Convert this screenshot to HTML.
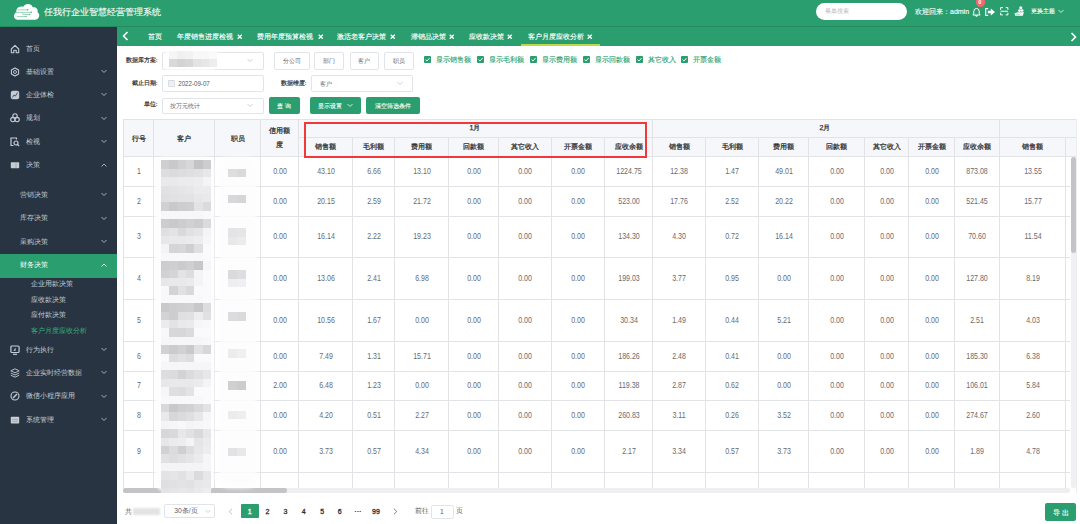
<!DOCTYPE html>
<html><head><meta charset="utf-8"><title>客户月度应收分析</title>
<style>
*{box-sizing:border-box;margin:0;padding:0}
html,body{width:1080px;height:524px;overflow:hidden;background:#fff;font-family:"Liberation Sans",sans-serif;position:relative}
.ab{position:absolute}
.t{position:absolute;white-space:nowrap;line-height:1}
.c{position:absolute;white-space:nowrap;line-height:1;transform:translate(-50%,-50%)}
.hd{left:0;top:0;width:1080px;height:27px;background:#2a9e6f}
.sb{left:0;top:27px;width:117px;height:497px;background:#283442}
.tb{left:117px;top:27px;width:963px;height:19px;background:#2a9e6f}
.mi{color:#c3ccd6;font-size:7px}
.tab{color:#fff;font-size:7px;-webkit-text-stroke:0.15px #fff}
.lbl{color:#333;font-size:6px;-webkit-text-stroke:0.2px #333}
.inp{border:1px solid #e1e4ea;border-radius:2px;background:#fff}
.btn{background:#2a9e6f;border-radius:2px;color:#fff;font-size:6.5px}
.bw{border:1px solid #e1e4ea;border-radius:2px;background:#fff;color:#606266;font-size:6.5px}
.chk{width:7px;height:7px;background:#2a9e6f;border-radius:1px}
.ck{color:#27a06c;font-size:7px;-webkit-text-stroke:0.12px #27a06c}
.vl{position:absolute;width:1px;background:#e2e3e7}
.hl{position:absolute;height:1px;background:#e2e3e7}
.th{color:#303133;font-size:7px;-webkit-text-stroke:0.25px #303133}
.td{color:#696b70;font-size:8.2px;transform:translate(-50%,-50%) scaleX(0.86)}
.mos{position:absolute;width:8.6px;height:8.6px}
</style></head><body>

<div class="ab hd"></div>
<div class="ab" style="left:0;top:26px;width:1080px;height:1px;background:#238a5f"></div>
<svg class="ab" style="left:10px;top:0" width="35" height="24" viewBox="0 0 764 524">
<path d="M160 430 C70 425 60 300 140 280 C120 190 200 120 290 150 C320 70 470 60 495 160 C570 140 625 210 600 265 C665 300 650 430 540 430 Z" fill="#fff"/>
<g stroke="#7cc5a2" stroke-width="16" fill="none"><path d="M160 215 H380"/><path d="M100 270 H460"/><path d="M280 315 H430"/><path d="M150 360 H350"/><path d="M260 270 L290 315"/></g>
<g fill="#5fb68d"><circle cx="385" cy="215" r="18"/><circle cx="462" cy="270" r="18"/><circle cx="432" cy="315" r="16"/><circle cx="352" cy="360" r="16"/></g>
</svg>
<div class="t" style="left:44px;top:7.5px;color:#fff;font-size:9px;-webkit-text-stroke:0.1px #fff">任我行企业智慧经营管理系统</div>
<div class="ab" style="left:816px;top:3px;width:91px;height:17px;background:#fff;border-radius:9px"></div>
<div class="t" style="left:825px;top:9.2px;color:#b8b8b8;font-size:5.5px">菜单搜索</div>
<div class="t" style="left:915px;top:7.5px;color:#fff;font-size:7px;-webkit-text-stroke:0.12px #fff">欢迎回来：admin</div>
<svg class="ab" style="left:972px;top:7px" width="9" height="9.5" viewBox="0 0 9 9.5"><path d="M1.8 7 V4.3 A2.7 2.8 0 0 1 7.2 4.3 V7 L8.2 8 H0.8 Z" stroke="#fff" stroke-width="1" fill="none" stroke-linejoin="round"/><path d="M3.6 8.4 A0.9 0.9 0 0 0 5.4 8.4" stroke="#fff" stroke-width="1" fill="#fff"/></svg>
<div class="ab" style="left:975.5px;top:-3.2px;width:9.8px;height:9.8px;border-radius:5px;background:#f06a6a"></div>
<div class="t" style="left:978.3px;top:-0.2px;color:#fff;font-size:5.5px;font-weight:bold">0</div>
<svg class="ab" style="left:985px;top:7.5px" width="10.5" height="8" viewBox="0 0 10.5 8"><path d="M3.2 0.6 H0.7 V7.4 H3.2" stroke="#fff" stroke-width="1.1" fill="none"/><path d="M2.8 2.8 H5.8 V0.5 L10 4 L5.8 7.5 V5.2 H2.8 Z" fill="#fff"/></svg>
<svg class="ab" style="left:1000px;top:7px" width="8.5" height="8.5" viewBox="0 0 8.5 8.5"><path d="M0.6 2.8 V0.6 H2.8 M5.7 0.6 H7.9 V2.8 M0.6 5.7 V7.9 H2.8 M5.7 7.9 H7.9 V5.7 M0.6 4.25 H7.9" stroke="#fff" stroke-width="1" fill="none"/></svg>
<svg class="ab" style="left:1013.5px;top:5.5px" width="10.5" height="10.5" viewBox="0 0 10.5 10.5"><circle cx="6.8" cy="1.8" r="1.5" fill="#fff"/><circle cx="5.5" cy="4.6" r="1.4" fill="#fff"/><circle cx="8.1" cy="4.6" r="1.4" fill="#fff"/><path d="M0.5 7.2 L4 6.2 H10 L8.8 9.8 H1.2 Z" fill="#fff"/><path d="M1.5 8.2 H6" stroke="#2a9e6f" stroke-width="0.5"/></svg>
<div class="t" style="left:1031px;top:8px;color:#fff;font-size:6px;-webkit-text-stroke:0.12px #fff">更换主题</div>
<svg class="ab" style="left:1058px;top:9px" width="6" height="5" viewBox="0 0 6 5"><path d="M0.5 1 L3 3.5 L5.5 1" stroke="#fff" stroke-width="0.8" fill="none"/></svg>
<div class="ab sb"></div>
<div class="ab" style="left:0;top:253.7px;width:117px;height:24px;background:#2a9e6f"></div>
<div class="t mi" style="left:20px;top:261.2px;color:#fff">财务决策</div>
<svg class="ab" style="left:101px;top:262.7px" width="6" height="5" viewBox="0 0 6 5"><path d="M0.5 3.5 L3 1 L5.5 3.5" stroke="#fff" stroke-width="0.8" fill="none"/></svg>
<div class="t mi" style="left:25.5px;top:44.6px">首页</div>
<svg class="ab" style="left:9.5px;top:43.6px" width="10" height="10" viewBox="0 0 10 10"><path d="M1.3 5 L5 1.3 L8.7 5 V8.8 H6.2 V6.3 H3.8 V8.8 H1.3 Z" stroke="#c5ccd4" stroke-width="1.1" fill="none" stroke-linejoin="round"/></svg>
<div class="t mi" style="left:25.5px;top:67.8px">基础设置</div>
<svg class="ab" style="left:101px;top:69.3px" width="6" height="5" viewBox="0 0 6 5"><path d="M0.5 1 L3 3.5 L5.5 1" stroke="#c3ccd6" stroke-width="0.8" fill="none"/></svg>
<svg class="ab" style="left:9.5px;top:66.8px" width="10" height="10" viewBox="0 0 10 10"><path d="M5 0.9 L8.6 3 V7 L5 9.1 L1.4 7 V3 Z" stroke="#c5ccd4" stroke-width="1.1" fill="none" stroke-linejoin="round"/><circle cx="5" cy="5" r="1.5" stroke="#c5ccd4" stroke-width="0.9" fill="none"/></svg>
<div class="t mi" style="left:25.5px;top:90.7px">企业体检</div>
<svg class="ab" style="left:101px;top:92.2px" width="6" height="5" viewBox="0 0 6 5"><path d="M0.5 1 L3 3.5 L5.5 1" stroke="#c3ccd6" stroke-width="0.8" fill="none"/></svg>
<svg class="ab" style="left:9.5px;top:89.7px" width="10" height="10" viewBox="0 0 10 10"><rect x="0.8" y="0.8" width="8.4" height="8.4" rx="2" fill="#c5ccd4"/><path d="M2.5 7.5 L4 5 L5.5 6 L7.5 2.5" stroke="#3d4856" stroke-width="0.9" fill="none"/></svg>
<div class="t mi" style="left:25.5px;top:114.2px">规划</div>
<svg class="ab" style="left:101px;top:115.7px" width="6" height="5" viewBox="0 0 6 5"><path d="M0.5 1 L3 3.5 L5.5 1" stroke="#c3ccd6" stroke-width="0.8" fill="none"/></svg>
<svg class="ab" style="left:9.5px;top:113.2px" width="10" height="10" viewBox="0 0 10 10"><circle cx="5" cy="3" r="2.2" stroke="#c5ccd4" stroke-width="1.1" fill="none"/><circle cx="2.9" cy="6.6" r="2.2" stroke="#c5ccd4" stroke-width="1.1" fill="none"/><circle cx="7.1" cy="6.6" r="2.2" stroke="#c5ccd4" stroke-width="1.1" fill="none"/></svg>
<div class="t mi" style="left:25.5px;top:137.9px">检视</div>
<svg class="ab" style="left:101px;top:139.4px" width="6" height="5" viewBox="0 0 6 5"><path d="M0.5 1 L3 3.5 L5.5 1" stroke="#c3ccd6" stroke-width="0.8" fill="none"/></svg>
<svg class="ab" style="left:9.5px;top:136.9px" width="10" height="10" viewBox="0 0 10 10"><path d="M6.5 2.5 V1 H1 V8.5 H3.5" stroke="#c5ccd4" stroke-width="1.2" fill="none"/><circle cx="6" cy="6" r="2" stroke="#c5ccd4" stroke-width="1.2" fill="none"/><path d="M7.5 7.5 L9.2 9.2" stroke="#c5ccd4" stroke-width="1.1"/></svg>
<div class="t mi" style="left:25.5px;top:161.2px">决策</div>
<svg class="ab" style="left:101px;top:162.7px" width="6" height="5" viewBox="0 0 6 5"><path d="M0.5 3.5 L3 1 L5.5 3.5" stroke="#c3ccd6" stroke-width="0.8" fill="none"/></svg>
<svg class="ab" style="left:9.5px;top:160.2px" width="10" height="10" viewBox="0 0 10 10"><rect x="0.8" y="2.2" width="8.4" height="6" rx="0.6" fill="#c5ccd4"/><path d="M6 2.2 V8.2" stroke="#8d96a3" stroke-width="0.6"/></svg>
<div class="t mi" style="left:20px;top:190.7px">营销决策</div>
<svg class="ab" style="left:101px;top:192.2px" width="6" height="5" viewBox="0 0 6 5"><path d="M0.5 1 L3 3.5 L5.5 1" stroke="#c3ccd6" stroke-width="0.8" fill="none"/></svg>
<div class="t mi" style="left:20px;top:214.2px">库存决策</div>
<svg class="ab" style="left:101px;top:215.7px" width="6" height="5" viewBox="0 0 6 5"><path d="M0.5 1 L3 3.5 L5.5 1" stroke="#c3ccd6" stroke-width="0.8" fill="none"/></svg>
<div class="t mi" style="left:20px;top:237.9px">采购决策</div>
<svg class="ab" style="left:101px;top:239.4px" width="6" height="5" viewBox="0 0 6 5"><path d="M0.5 1 L3 3.5 L5.5 1" stroke="#c3ccd6" stroke-width="0.8" fill="none"/></svg>
<div class="t mi" style="left:25.5px;top:345.6px">行为执行</div>
<svg class="ab" style="left:101px;top:347.1px" width="6" height="5" viewBox="0 0 6 5"><path d="M0.5 1 L3 3.5 L5.5 1" stroke="#c3ccd6" stroke-width="0.8" fill="none"/></svg>
<svg class="ab" style="left:9.5px;top:344.6px" width="10" height="10" viewBox="0 0 10 10"><rect x="0.9" y="1" width="8.2" height="6.5" rx="1" stroke="#c5ccd4" stroke-width="1.2" fill="none"/><path d="M3 9.3 H7" stroke="#c5ccd4" stroke-width="1.2"/><path d="M3.3 5.8 L5.6 2.8 V5.8 Z" fill="#c5ccd4"/></svg>
<div class="t mi" style="left:25.5px;top:368.7px">企业实时经营数据</div>
<svg class="ab" style="left:101px;top:370.2px" width="6" height="5" viewBox="0 0 6 5"><path d="M0.5 1 L3 3.5 L5.5 1" stroke="#c3ccd6" stroke-width="0.8" fill="none"/></svg>
<svg class="ab" style="left:9.5px;top:367.7px" width="10" height="10" viewBox="0 0 10 10"><path d="M5 0.8 L9.2 2.8 L5 4.8 L0.8 2.8 Z" stroke="#c5ccd4" stroke-width="0.9" fill="none"/><path d="M0.8 5 L5 7 L9.2 5 M0.8 7.2 L5 9.2 L9.2 7.2" stroke="#c5ccd4" stroke-width="0.9" fill="none"/></svg>
<div class="t mi" style="left:25.5px;top:392.2px">微信小程序应用</div>
<svg class="ab" style="left:101px;top:393.7px" width="6" height="5" viewBox="0 0 6 5"><path d="M0.5 1 L3 3.5 L5.5 1" stroke="#c3ccd6" stroke-width="0.8" fill="none"/></svg>
<svg class="ab" style="left:9.5px;top:391.2px" width="10" height="10" viewBox="0 0 10 10"><circle cx="5" cy="5" r="4" stroke="#c5ccd4" stroke-width="1.1" fill="none"/><path d="M3 7 L7 3" stroke="#c5ccd4" stroke-width="1.4"/></svg>
<div class="t mi" style="left:25.5px;top:415.5px">系统管理</div>
<svg class="ab" style="left:101px;top:417.0px" width="6" height="5" viewBox="0 0 6 5"><path d="M0.5 1 L3 3.5 L5.5 1" stroke="#c3ccd6" stroke-width="0.8" fill="none"/></svg>
<svg class="ab" style="left:9.5px;top:414.5px" width="10" height="10" viewBox="0 0 10 10"><rect x="0.8" y="1.8" width="8.4" height="6.8" rx="0.8" fill="#c5ccd4"/><path d="M2.2 4.5 H7.8 M2.2 6.3 H7.8" stroke="#8d96a3" stroke-width="0.6"/></svg>
<div class="t mi" style="left:30.5px;top:280.3px">企业用款决策</div>
<div class="t mi" style="left:30.5px;top:295.5px">应收款决策</div>
<div class="t mi" style="left:30.5px;top:311.2px">应付款决策</div>
<div class="t mi" style="left:31px;top:327.2px;color:#2fb27a">客户月度应收分析</div>
<div class="ab tb"></div>
<svg class="ab" style="left:122px;top:31px" width="7" height="10" viewBox="0 0 7 10"><path d="M5.5 1 L1.5 5 L5.5 9" stroke="#fff" stroke-width="1.6" fill="none"/></svg>
<svg class="ab" style="left:1070px;top:31.5px" width="7" height="10" viewBox="0 0 7 10"><path d="M1.5 1 L5.5 5 L1.5 9" stroke="#fff" stroke-width="1.6" fill="none"/></svg>
<div class="t tab" style="left:148px;top:33px">首页</div>
<div class="t tab" style="left:177px;top:33px">年度销售进度检视</div>
<svg class="ab" style="left:236.5px;top:33.6px" width="5.5" height="5.5" viewBox="0 0 5.5 5.5"><path d="M0.7 0.7 L4.8 4.8 M4.8 0.7 L0.7 4.8" stroke="#fff" stroke-width="1.3"/></svg>
<div class="t tab" style="left:257px;top:33px">费用年度预算检视</div>
<svg class="ab" style="left:318px;top:33.6px" width="5.5" height="5.5" viewBox="0 0 5.5 5.5"><path d="M0.7 0.7 L4.8 4.8 M4.8 0.7 L0.7 4.8" stroke="#fff" stroke-width="1.3"/></svg>
<div class="t tab" style="left:337px;top:33px">激活老客户决策</div>
<svg class="ab" style="left:390px;top:33.6px" width="5.5" height="5.5" viewBox="0 0 5.5 5.5"><path d="M0.7 0.7 L4.8 4.8 M4.8 0.7 L0.7 4.8" stroke="#fff" stroke-width="1.3"/></svg>
<div class="t tab" style="left:410.5px;top:33px">滞销品决策</div>
<svg class="ab" style="left:448.5px;top:33.6px" width="5.5" height="5.5" viewBox="0 0 5.5 5.5"><path d="M0.7 0.7 L4.8 4.8 M4.8 0.7 L0.7 4.8" stroke="#fff" stroke-width="1.3"/></svg>
<div class="t tab" style="left:469px;top:33px">应收款决策</div>
<svg class="ab" style="left:507px;top:33.6px" width="5.5" height="5.5" viewBox="0 0 5.5 5.5"><path d="M0.7 0.7 L4.8 4.8 M4.8 0.7 L0.7 4.8" stroke="#fff" stroke-width="1.3"/></svg>
<div class="t tab" style="left:527.5px;top:33px">客户月度应收分析</div>
<svg class="ab" style="left:587px;top:33.6px" width="5.5" height="5.5" viewBox="0 0 5.5 5.5"><path d="M0.7 0.7 L4.8 4.8 M4.8 0.7 L0.7 4.8" stroke="#fff" stroke-width="1.3"/></svg>
<div class="ab" style="left:520.5px;top:44px;width:79px;height:1.5px;background:#bcd94a"></div>
<div class="t lbl" style="right:922.5px;top:56.8px">数据库方案:</div>
<div class="t lbl" style="right:922.5px;top:79.8px">截止日期:</div>
<div class="t lbl" style="right:922.5px;top:101.39999999999999px">单位:</div>
<div class="t lbl" style="right:773.5px;top:79.8px">数据维度:</div>
<div class="ab inp" style="left:162px;top:52px;width:102px;height:17.5px"></div>
<svg class="ab" style="left:246.5px;top:58.25px" width="6" height="5" viewBox="0 0 6 5"><path d="M0.5 1 L3 3.5 L5.5 1" stroke="#c0c4cc" stroke-width="0.8" fill="none"/></svg>
<div class="ab" style="left:165px;top:50.5px;width:53px;height:19px;border-radius:2px 7px 7px 2px;background:#fff;filter:blur(0.8px)"></div>
<div class="ab" style="left:0;top:0;width:260px;height:80px;filter:blur(0.5px);border-radius:0"><div class="ab" style="left:169px;top:51.2px;width:8.2px;height:7.6px;background:rgb(246,246,246)"></div><div class="ab" style="left:169px;top:58.8px;width:8.2px;height:8.6px;background:rgb(216,217,216)"></div><div class="ab" style="left:177px;top:51.2px;width:8.2px;height:7.6px;background:rgb(240,240,240)"></div><div class="ab" style="left:177px;top:58.8px;width:8.2px;height:8.6px;background:rgb(210,211,210)"></div><div class="ab" style="left:185px;top:51.2px;width:8.2px;height:7.6px;background:rgb(242,242,242)"></div><div class="ab" style="left:185px;top:58.8px;width:8.2px;height:8.6px;background:rgb(214,215,214)"></div><div class="ab" style="left:193px;top:51.2px;width:8.2px;height:7.6px;background:rgb(248,248,248)"></div><div class="ab" style="left:193px;top:58.8px;width:8.2px;height:8.6px;background:rgb(226,227,226)"></div><div class="ab" style="left:201px;top:51.2px;width:8.2px;height:7.6px;background:rgb(248,248,248)"></div><div class="ab" style="left:201px;top:58.8px;width:8.2px;height:8.6px;background:rgb(230,231,230)"></div><div class="ab" style="left:209px;top:51.2px;width:8.2px;height:7.6px;background:rgb(250,250,250)"></div><div class="ab" style="left:209px;top:58.8px;width:8.2px;height:8.6px;background:rgb(236,237,236)"></div></div>
<div class="ab inp" style="left:162px;top:75px;width:102px;height:16.5px"></div>
<div class="c" style="left:193.6px;top:82.7px;color:#55575c;font-size:7px;transform:translate(-50%,-50%) scaleX(0.88)">2022-09-07</div>
<div class="ab" style="left:168px;top:80px;width:6.8px;height:6.8px;background:#eef0f4;border:0.8px solid #dcdfe6;border-top:1.6px solid #d6d9e0;border-radius:1px"></div>
<div class="ab inp" style="left:162px;top:97.5px;width:102px;height:16.5px"></div>
<div class="t" style="left:170px;top:103.15px;color:#606266;font-size:6px">按万元统计</div>
<svg class="ab" style="left:246.5px;top:103.25px" width="6" height="5" viewBox="0 0 6 5"><path d="M0.5 1 L3 3.5 L5.5 1" stroke="#c0c4cc" stroke-width="0.8" fill="none"/></svg>
<div class="ab inp" style="left:311px;top:75px;width:102px;height:16.5px"></div>
<div class="t" style="left:320px;top:80.65px;color:#606266;font-size:6px">客户</div>
<svg class="ab" style="left:396.5px;top:80.75px" width="6" height="5" viewBox="0 0 6 5"><path d="M0.5 1 L3 3.5 L5.5 1" stroke="#c0c4cc" stroke-width="0.8" fill="none"/></svg>
<div class="ab bw" style="left:274px;top:52px;width:35.5px;height:17.5px"></div>
<div class="c" style="left:291.75px;top:61.3px;color:#606266;font-size:6px">分公司</div>
<div class="ab bw" style="left:314px;top:52px;width:30px;height:17.5px"></div>
<div class="c" style="left:329.0px;top:61.3px;color:#606266;font-size:6px">部门</div>
<div class="ab bw" style="left:349.5px;top:52px;width:29px;height:17.5px"></div>
<div class="c" style="left:364.0px;top:61.3px;color:#606266;font-size:6px">客户</div>
<div class="ab bw" style="left:384px;top:52px;width:29.5px;height:17.5px"></div>
<div class="c" style="left:398.75px;top:61.3px;color:#606266;font-size:6px">职员</div>
<div class="ab btn" style="left:269px;top:97px;width:30.5px;height:17px"></div>
<div class="ab btn" style="left:310px;top:97px;width:51px;height:17px"></div>
<div class="ab btn" style="left:366px;top:97px;width:53.5px;height:17px"></div>
<div class="c" style="left:284px;top:105.5px;color:#fff;font-size:6px;-webkit-text-stroke:0.1px #fff">查 询</div>
<div class="c" style="left:330px;top:105.5px;color:#fff;font-size:6px;-webkit-text-stroke:0.1px #fff">显示设置</div>
<svg class="ab" style="left:346.5px;top:103.3px" width="6" height="5" viewBox="0 0 6 5"><path d="M0.5 1 L3 3.5 L5.5 1" stroke="#fff" stroke-width="0.8" fill="none"/></svg>
<div class="c" style="left:392.5px;top:105.5px;color:#fff;font-size:6px;-webkit-text-stroke:0.1px #fff">清空筛选条件</div>
<div class="ab chk" style="left:424px;top:56px"></div>
<svg class="ab" style="left:424px;top:56px" width="7" height="7" viewBox="0 0 7 7"><path d="M1.5 3.6 L3 5 L5.6 2" stroke="#fff" stroke-width="0.9" fill="none"/></svg>
<div class="t ck" style="left:436px;top:55.6px">显示销售额</div>
<div class="ab chk" style="left:477px;top:56px"></div>
<svg class="ab" style="left:477px;top:56px" width="7" height="7" viewBox="0 0 7 7"><path d="M1.5 3.6 L3 5 L5.6 2" stroke="#fff" stroke-width="0.9" fill="none"/></svg>
<div class="t ck" style="left:488.5px;top:55.6px">显示毛利额</div>
<div class="ab chk" style="left:530px;top:56px"></div>
<svg class="ab" style="left:530px;top:56px" width="7" height="7" viewBox="0 0 7 7"><path d="M1.5 3.6 L3 5 L5.6 2" stroke="#fff" stroke-width="0.9" fill="none"/></svg>
<div class="t ck" style="left:541.5px;top:55.6px">显示费用额</div>
<div class="ab chk" style="left:582.5px;top:56px"></div>
<svg class="ab" style="left:582.5px;top:56px" width="7" height="7" viewBox="0 0 7 7"><path d="M1.5 3.6 L3 5 L5.6 2" stroke="#fff" stroke-width="0.9" fill="none"/></svg>
<div class="t ck" style="left:594.5px;top:55.6px">显示回款额</div>
<div class="ab chk" style="left:636px;top:56px"></div>
<svg class="ab" style="left:636px;top:56px" width="7" height="7" viewBox="0 0 7 7"><path d="M1.5 3.6 L3 5 L5.6 2" stroke="#fff" stroke-width="0.9" fill="none"/></svg>
<div class="t ck" style="left:647.5px;top:55.6px">其它收入</div>
<div class="ab chk" style="left:681px;top:56px"></div>
<svg class="ab" style="left:681px;top:56px" width="7" height="7" viewBox="0 0 7 7"><path d="M1.5 3.6 L3 5 L5.6 2" stroke="#fff" stroke-width="0.9" fill="none"/></svg>
<div class="t ck" style="left:692.5px;top:55.6px">开票金额</div>
<div class="ab" style="left:123px;top:119px;width:952.5px;height:37px;background:#f5f7fa"></div>
<div class="hl" style="left:123px;top:119px;width:952.5px"></div>
<div class="hl" style="left:298px;top:137px;width:778px"></div>
<div class="hl" style="left:123px;top:156px;width:952.5px"></div>
<div class="hl" style="left:123px;top:186px;width:947px"></div>
<div class="hl" style="left:123px;top:216px;width:947px"></div>
<div class="hl" style="left:123px;top:257px;width:947px"></div>
<div class="hl" style="left:123px;top:299px;width:947px"></div>
<div class="hl" style="left:123px;top:341px;width:947px"></div>
<div class="hl" style="left:123px;top:371px;width:947px"></div>
<div class="hl" style="left:123px;top:400px;width:947px"></div>
<div class="hl" style="left:123px;top:430px;width:947px"></div>
<div class="hl" style="left:123px;top:472px;width:947px"></div>
<div class="vl" style="left:123px;top:119px;height:369px"></div>
<div class="vl" style="left:153px;top:119px;height:369px"></div>
<div class="vl" style="left:214px;top:119px;height:369px"></div>
<div class="vl" style="left:260px;top:119px;height:369px"></div>
<div class="vl" style="left:298px;top:119px;height:369px"></div>
<div class="vl" style="left:352px;top:137px;height:351px"></div>
<div class="vl" style="left:394px;top:137px;height:351px"></div>
<div class="vl" style="left:448px;top:137px;height:351px"></div>
<div class="vl" style="left:498px;top:137px;height:351px"></div>
<div class="vl" style="left:551px;top:137px;height:351px"></div>
<div class="vl" style="left:604px;top:137px;height:351px"></div>
<div class="vl" style="left:652px;top:119px;height:369px"></div>
<div class="vl" style="left:705px;top:137px;height:351px"></div>
<div class="vl" style="left:758px;top:137px;height:351px"></div>
<div class="vl" style="left:808px;top:137px;height:351px"></div>
<div class="vl" style="left:864px;top:137px;height:351px"></div>
<div class="vl" style="left:908px;top:137px;height:351px"></div>
<div class="vl" style="left:954px;top:137px;height:351px"></div>
<div class="vl" style="left:999px;top:119px;height:369px"></div>
<div class="vl" style="left:1065px;top:137px;height:351px"></div>
<div class="vl" style="left:1075.5px;top:119px;height:374px;background:#eceef2"></div>
<div class="c th" style="left:138.5px;top:138px">行号</div>
<div class="c th" style="left:184.0px;top:138px">客户</div>
<div class="c th" style="left:237.5px;top:138px">职员</div>
<div class="c th" style="left:279.5px;top:130px">信用额</div>
<div class="c th" style="left:279.5px;top:143.8px">度</div>
<div class="c th" style="left:475px;top:127.2px">1月</div>
<div class="c th" style="left:825px;top:127.2px">2月</div>
<div class="c th" style="left:325.5px;top:146.3px">销售额</div>
<div class="c th" style="left:679.0px;top:146.3px">销售额</div>
<div class="c th" style="left:373.5px;top:146.3px">毛利额</div>
<div class="c th" style="left:732.0px;top:146.3px">毛利额</div>
<div class="c th" style="left:421.5px;top:146.3px">费用额</div>
<div class="c th" style="left:783.5px;top:146.3px">费用额</div>
<div class="c th" style="left:473.5px;top:146.3px">回款额</div>
<div class="c th" style="left:836.5px;top:146.3px">回款额</div>
<div class="c th" style="left:525.0px;top:146.3px">其它收入</div>
<div class="c th" style="left:886.5px;top:146.3px">其它收入</div>
<div class="c th" style="left:578.0px;top:146.3px">开票金额</div>
<div class="c th" style="left:931.5px;top:146.3px">开票金额</div>
<div class="c th" style="left:628.5px;top:146.3px">应收余额</div>
<div class="c th" style="left:977.0px;top:146.3px">应收余额</div>
<div class="c th" style="left:1032px;top:146.3px">销售额</div>
<div class="c td" style="left:138.5px;top:171.5px">1</div>
<div class="c td" style="left:279.5px;top:171.5px">0.00</div>
<div class="c td" style="left:325.5px;top:171.5px">43.10</div>
<div class="c td" style="left:373.5px;top:171.5px">6.66</div>
<div class="c td" style="left:421.5px;top:171.5px">13.10</div>
<div class="c td" style="left:473.5px;top:171.5px">0.00</div>
<div class="c td" style="left:525.0px;top:171.5px">0.00</div>
<div class="c td" style="left:578.0px;top:171.5px">0.00</div>
<div class="c td" style="left:628.5px;top:171.5px">1224.75</div>
<div class="c td" style="left:679.0px;top:171.5px">12.38</div>
<div class="c td" style="left:732.0px;top:171.5px">1.47</div>
<div class="c td" style="left:783.5px;top:171.5px">49.01</div>
<div class="c td" style="left:836.5px;top:171.5px">0.00</div>
<div class="c td" style="left:886.5px;top:171.5px">0.00</div>
<div class="c td" style="left:931.5px;top:171.5px">0.00</div>
<div class="c td" style="left:977.0px;top:171.5px">873.08</div>
<div class="c td" style="left:1032.5px;top:171.5px">13.55</div>
<div class="c td" style="left:138.5px;top:201.5px">2</div>
<div class="c td" style="left:279.5px;top:201.5px">0.00</div>
<div class="c td" style="left:325.5px;top:201.5px">20.15</div>
<div class="c td" style="left:373.5px;top:201.5px">2.59</div>
<div class="c td" style="left:421.5px;top:201.5px">21.72</div>
<div class="c td" style="left:473.5px;top:201.5px">0.00</div>
<div class="c td" style="left:525.0px;top:201.5px">0.00</div>
<div class="c td" style="left:578.0px;top:201.5px">0.00</div>
<div class="c td" style="left:628.5px;top:201.5px">523.00</div>
<div class="c td" style="left:679.0px;top:201.5px">17.76</div>
<div class="c td" style="left:732.0px;top:201.5px">2.52</div>
<div class="c td" style="left:783.5px;top:201.5px">20.22</div>
<div class="c td" style="left:836.5px;top:201.5px">0.00</div>
<div class="c td" style="left:886.5px;top:201.5px">0.00</div>
<div class="c td" style="left:931.5px;top:201.5px">0.00</div>
<div class="c td" style="left:977.0px;top:201.5px">521.45</div>
<div class="c td" style="left:1032.5px;top:201.5px">15.77</div>
<div class="c td" style="left:138.5px;top:237.0px">3</div>
<div class="c td" style="left:279.5px;top:237.0px">0.00</div>
<div class="c td" style="left:325.5px;top:237.0px">16.14</div>
<div class="c td" style="left:373.5px;top:237.0px">2.22</div>
<div class="c td" style="left:421.5px;top:237.0px">19.23</div>
<div class="c td" style="left:473.5px;top:237.0px">0.00</div>
<div class="c td" style="left:525.0px;top:237.0px">0.00</div>
<div class="c td" style="left:578.0px;top:237.0px">0.00</div>
<div class="c td" style="left:628.5px;top:237.0px">134.30</div>
<div class="c td" style="left:679.0px;top:237.0px">4.30</div>
<div class="c td" style="left:732.0px;top:237.0px">0.72</div>
<div class="c td" style="left:783.5px;top:237.0px">16.14</div>
<div class="c td" style="left:836.5px;top:237.0px">0.00</div>
<div class="c td" style="left:886.5px;top:237.0px">0.00</div>
<div class="c td" style="left:931.5px;top:237.0px">0.00</div>
<div class="c td" style="left:977.0px;top:237.0px">70.60</div>
<div class="c td" style="left:1032.5px;top:237.0px">11.54</div>
<div class="c td" style="left:138.5px;top:278.5px">4</div>
<div class="c td" style="left:279.5px;top:278.5px">0.00</div>
<div class="c td" style="left:325.5px;top:278.5px">13.06</div>
<div class="c td" style="left:373.5px;top:278.5px">2.41</div>
<div class="c td" style="left:421.5px;top:278.5px">6.98</div>
<div class="c td" style="left:473.5px;top:278.5px">0.00</div>
<div class="c td" style="left:525.0px;top:278.5px">0.00</div>
<div class="c td" style="left:578.0px;top:278.5px">0.00</div>
<div class="c td" style="left:628.5px;top:278.5px">199.03</div>
<div class="c td" style="left:679.0px;top:278.5px">3.77</div>
<div class="c td" style="left:732.0px;top:278.5px">0.95</div>
<div class="c td" style="left:783.5px;top:278.5px">0.00</div>
<div class="c td" style="left:836.5px;top:278.5px">0.00</div>
<div class="c td" style="left:886.5px;top:278.5px">0.00</div>
<div class="c td" style="left:931.5px;top:278.5px">0.00</div>
<div class="c td" style="left:977.0px;top:278.5px">127.80</div>
<div class="c td" style="left:1032.5px;top:278.5px">8.19</div>
<div class="c td" style="left:138.5px;top:320.5px">5</div>
<div class="c td" style="left:279.5px;top:320.5px">0.00</div>
<div class="c td" style="left:325.5px;top:320.5px">10.56</div>
<div class="c td" style="left:373.5px;top:320.5px">1.67</div>
<div class="c td" style="left:421.5px;top:320.5px">0.00</div>
<div class="c td" style="left:473.5px;top:320.5px">0.00</div>
<div class="c td" style="left:525.0px;top:320.5px">0.00</div>
<div class="c td" style="left:578.0px;top:320.5px">0.00</div>
<div class="c td" style="left:628.5px;top:320.5px">30.34</div>
<div class="c td" style="left:679.0px;top:320.5px">1.49</div>
<div class="c td" style="left:732.0px;top:320.5px">0.44</div>
<div class="c td" style="left:783.5px;top:320.5px">5.21</div>
<div class="c td" style="left:836.5px;top:320.5px">0.00</div>
<div class="c td" style="left:886.5px;top:320.5px">0.00</div>
<div class="c td" style="left:931.5px;top:320.5px">0.00</div>
<div class="c td" style="left:977.0px;top:320.5px">2.51</div>
<div class="c td" style="left:1032.5px;top:320.5px">4.03</div>
<div class="c td" style="left:138.5px;top:356.5px">6</div>
<div class="c td" style="left:279.5px;top:356.5px">0.00</div>
<div class="c td" style="left:325.5px;top:356.5px">7.49</div>
<div class="c td" style="left:373.5px;top:356.5px">1.31</div>
<div class="c td" style="left:421.5px;top:356.5px">15.71</div>
<div class="c td" style="left:473.5px;top:356.5px">0.00</div>
<div class="c td" style="left:525.0px;top:356.5px">0.00</div>
<div class="c td" style="left:578.0px;top:356.5px">0.00</div>
<div class="c td" style="left:628.5px;top:356.5px">186.26</div>
<div class="c td" style="left:679.0px;top:356.5px">2.48</div>
<div class="c td" style="left:732.0px;top:356.5px">0.41</div>
<div class="c td" style="left:783.5px;top:356.5px">0.00</div>
<div class="c td" style="left:836.5px;top:356.5px">0.00</div>
<div class="c td" style="left:886.5px;top:356.5px">0.00</div>
<div class="c td" style="left:931.5px;top:356.5px">0.00</div>
<div class="c td" style="left:977.0px;top:356.5px">185.30</div>
<div class="c td" style="left:1032.5px;top:356.5px">6.38</div>
<div class="c td" style="left:138.5px;top:386.0px">7</div>
<div class="c td" style="left:279.5px;top:386.0px">2.00</div>
<div class="c td" style="left:325.5px;top:386.0px">6.48</div>
<div class="c td" style="left:373.5px;top:386.0px">1.23</div>
<div class="c td" style="left:421.5px;top:386.0px">0.00</div>
<div class="c td" style="left:473.5px;top:386.0px">0.00</div>
<div class="c td" style="left:525.0px;top:386.0px">0.00</div>
<div class="c td" style="left:578.0px;top:386.0px">0.00</div>
<div class="c td" style="left:628.5px;top:386.0px">119.38</div>
<div class="c td" style="left:679.0px;top:386.0px">2.87</div>
<div class="c td" style="left:732.0px;top:386.0px">0.62</div>
<div class="c td" style="left:783.5px;top:386.0px">0.00</div>
<div class="c td" style="left:836.5px;top:386.0px">0.00</div>
<div class="c td" style="left:886.5px;top:386.0px">0.00</div>
<div class="c td" style="left:931.5px;top:386.0px">0.00</div>
<div class="c td" style="left:977.0px;top:386.0px">106.01</div>
<div class="c td" style="left:1032.5px;top:386.0px">5.84</div>
<div class="c td" style="left:138.5px;top:415.5px">8</div>
<div class="c td" style="left:279.5px;top:415.5px">0.00</div>
<div class="c td" style="left:325.5px;top:415.5px">4.20</div>
<div class="c td" style="left:373.5px;top:415.5px">0.51</div>
<div class="c td" style="left:421.5px;top:415.5px">2.27</div>
<div class="c td" style="left:473.5px;top:415.5px">0.00</div>
<div class="c td" style="left:525.0px;top:415.5px">0.00</div>
<div class="c td" style="left:578.0px;top:415.5px">0.00</div>
<div class="c td" style="left:628.5px;top:415.5px">260.83</div>
<div class="c td" style="left:679.0px;top:415.5px">3.11</div>
<div class="c td" style="left:732.0px;top:415.5px">0.26</div>
<div class="c td" style="left:783.5px;top:415.5px">3.52</div>
<div class="c td" style="left:836.5px;top:415.5px">0.00</div>
<div class="c td" style="left:886.5px;top:415.5px">0.00</div>
<div class="c td" style="left:931.5px;top:415.5px">0.00</div>
<div class="c td" style="left:977.0px;top:415.5px">274.67</div>
<div class="c td" style="left:1032.5px;top:415.5px">2.60</div>
<div class="c td" style="left:138.5px;top:451.5px">9</div>
<div class="c td" style="left:279.5px;top:451.5px">0.00</div>
<div class="c td" style="left:325.5px;top:451.5px">3.73</div>
<div class="c td" style="left:373.5px;top:451.5px">0.57</div>
<div class="c td" style="left:421.5px;top:451.5px">4.34</div>
<div class="c td" style="left:473.5px;top:451.5px">0.00</div>
<div class="c td" style="left:525.0px;top:451.5px">0.00</div>
<div class="c td" style="left:578.0px;top:451.5px">0.00</div>
<div class="c td" style="left:628.5px;top:451.5px">2.17</div>
<div class="c td" style="left:679.0px;top:451.5px">3.34</div>
<div class="c td" style="left:732.0px;top:451.5px">0.57</div>
<div class="c td" style="left:783.5px;top:451.5px">3.73</div>
<div class="c td" style="left:836.5px;top:451.5px">0.00</div>
<div class="c td" style="left:886.5px;top:451.5px">0.00</div>
<div class="c td" style="left:931.5px;top:451.5px">0.00</div>
<div class="c td" style="left:977.0px;top:451.5px">1.89</div>
<div class="c td" style="left:1032.5px;top:451.5px">4.78</div>
<div class="ab" style="left:303.8px;top:122px;width:343.2px;height:36px;border:2px solid #f23838"></div>
<div class="ab" style="left:123px;top:488px;width:947px;height:4.5px;background:#efeff1;border-radius:2px"></div>
<div class="ab" style="left:123px;top:488px;width:164px;height:4.5px;background:#c4c4c8;border-radius:2px"></div>
<div class="ab" style="left:1070.5px;top:156.5px;width:5px;height:331px;background:#f0f0f2;border-radius:2.5px"></div>
<div class="ab" style="left:1070.5px;top:156.5px;width:5px;height:96px;background:#c4c4c8;border-radius:2.5px"></div>
<div class="ab" style="left:155px;top:157px;width:59px;height:336px;background:#fdfdfd;border-radius:10px 10px 14px 14px;filter:blur(1.5px)"></div>
<div class="ab" style="left:219px;top:157px;width:38px;height:331px;background:#fdfdfd;border-radius:10px;filter:blur(2px);opacity:.9"></div>
<div class="ab" style="left:0;top:0;width:1080px;height:524px;filter:blur(0.45px)"><div class="ab" style="left:160.8px;top:160.3px;width:8.5px;height:8.5px;background:rgb(207,207,209)"></div><div class="ab" style="left:169.2px;top:160.3px;width:8.5px;height:8.5px;background:rgb(201,201,203)"></div><div class="ab" style="left:177.6px;top:160.3px;width:8.5px;height:8.5px;background:rgb(209,209,211)"></div><div class="ab" style="left:186.0px;top:160.3px;width:8.5px;height:8.5px;background:rgb(215,215,217)"></div><div class="ab" style="left:194.4px;top:160.3px;width:8.5px;height:8.5px;background:rgb(195,195,197)"></div><div class="ab" style="left:202.8px;top:160.3px;width:8.5px;height:8.5px;background:rgb(205,205,207)"></div><div class="ab" style="left:160.8px;top:168.7px;width:8.5px;height:8.5px;background:rgb(221,221,223)"></div><div class="ab" style="left:169.2px;top:168.7px;width:8.5px;height:8.5px;background:rgb(219,219,221)"></div><div class="ab" style="left:177.6px;top:168.7px;width:8.5px;height:8.5px;background:rgb(221,221,223)"></div><div class="ab" style="left:186.0px;top:168.7px;width:8.5px;height:8.5px;background:rgb(223,223,225)"></div><div class="ab" style="left:194.4px;top:168.7px;width:8.5px;height:8.5px;background:rgb(225,225,227)"></div><div class="ab" style="left:202.8px;top:168.7px;width:8.5px;height:8.5px;background:rgb(231,231,233)"></div><div class="ab" style="left:160.8px;top:177.1px;width:8.5px;height:8.5px;background:rgb(233,233,235)"></div><div class="ab" style="left:169.2px;top:177.1px;width:8.5px;height:8.5px;background:rgb(233,233,235)"></div><div class="ab" style="left:177.6px;top:177.1px;width:8.5px;height:8.5px;background:rgb(235,235,237)"></div><div class="ab" style="left:186.0px;top:177.1px;width:8.5px;height:8.5px;background:rgb(235,235,237)"></div><div class="ab" style="left:194.4px;top:177.1px;width:8.5px;height:8.5px;background:rgb(237,237,239)"></div><div class="ab" style="left:202.8px;top:177.1px;width:8.5px;height:8.5px;background:rgb(244,244,246)"></div><div class="ab" style="left:160.8px;top:185.5px;width:8.5px;height:8.5px;background:rgb(225,225,227)"></div><div class="ab" style="left:169.2px;top:185.5px;width:8.5px;height:8.5px;background:rgb(227,227,229)"></div><div class="ab" style="left:177.6px;top:185.5px;width:8.5px;height:8.5px;background:rgb(229,229,231)"></div><div class="ab" style="left:186.0px;top:185.5px;width:8.5px;height:8.5px;background:rgb(231,231,233)"></div><div class="ab" style="left:194.4px;top:185.5px;width:8.5px;height:8.5px;background:rgb(235,235,237)"></div><div class="ab" style="left:202.8px;top:185.5px;width:8.5px;height:8.5px;background:rgb(235,235,237)"></div><div class="ab" style="left:160.8px;top:193.9px;width:8.5px;height:8.5px;background:rgb(223,223,225)"></div><div class="ab" style="left:169.2px;top:193.9px;width:8.5px;height:8.5px;background:rgb(225,225,227)"></div><div class="ab" style="left:177.6px;top:193.9px;width:8.5px;height:8.5px;background:rgb(227,227,229)"></div><div class="ab" style="left:186.0px;top:193.9px;width:8.5px;height:8.5px;background:rgb(227,227,229)"></div><div class="ab" style="left:194.4px;top:193.9px;width:8.5px;height:8.5px;background:rgb(231,231,233)"></div><div class="ab" style="left:202.8px;top:193.9px;width:8.5px;height:8.5px;background:rgb(233,233,235)"></div><div class="ab" style="left:160.8px;top:202.3px;width:8.5px;height:8.5px;background:rgb(209,209,211)"></div><div class="ab" style="left:169.2px;top:202.3px;width:8.5px;height:8.5px;background:rgb(201,201,203)"></div><div class="ab" style="left:177.6px;top:202.3px;width:8.5px;height:8.5px;background:rgb(205,205,207)"></div><div class="ab" style="left:186.0px;top:202.3px;width:8.5px;height:8.5px;background:rgb(207,207,209)"></div><div class="ab" style="left:194.4px;top:202.3px;width:8.5px;height:8.5px;background:rgb(227,227,229)"></div><div class="ab" style="left:202.8px;top:202.3px;width:8.5px;height:8.5px;background:rgb(219,219,221)"></div><div class="ab" style="left:160.8px;top:210.7px;width:8.5px;height:8.5px;background:rgb(247,247,249)"></div><div class="ab" style="left:169.2px;top:210.7px;width:8.5px;height:8.5px;background:rgb(247,247,249)"></div><div class="ab" style="left:177.6px;top:210.7px;width:8.5px;height:8.5px;background:rgb(247,247,249)"></div><div class="ab" style="left:186.0px;top:210.7px;width:8.5px;height:8.5px;background:rgb(247,247,249)"></div><div class="ab" style="left:194.4px;top:210.7px;width:8.5px;height:8.5px;background:rgb(247,247,249)"></div><div class="ab" style="left:202.8px;top:210.7px;width:8.5px;height:8.5px;background:rgb(249,249,251)"></div><div class="ab" style="left:160.8px;top:219.1px;width:8.5px;height:8.5px;background:rgb(205,205,207)"></div><div class="ab" style="left:169.2px;top:219.1px;width:8.5px;height:8.5px;background:rgb(201,201,203)"></div><div class="ab" style="left:177.6px;top:219.1px;width:8.5px;height:8.5px;background:rgb(205,205,207)"></div><div class="ab" style="left:186.0px;top:219.1px;width:8.5px;height:8.5px;background:rgb(209,209,211)"></div><div class="ab" style="left:194.4px;top:219.1px;width:8.5px;height:8.5px;background:rgb(205,205,207)"></div><div class="ab" style="left:202.8px;top:219.1px;width:8.5px;height:8.5px;background:rgb(219,219,221)"></div><div class="ab" style="left:160.8px;top:227.5px;width:8.5px;height:8.5px;background:rgb(223,223,225)"></div><div class="ab" style="left:169.2px;top:227.5px;width:8.5px;height:8.5px;background:rgb(227,227,229)"></div><div class="ab" style="left:177.6px;top:227.5px;width:8.5px;height:8.5px;background:rgb(217,217,219)"></div><div class="ab" style="left:186.0px;top:227.5px;width:8.5px;height:8.5px;background:rgb(225,225,227)"></div><div class="ab" style="left:194.4px;top:227.5px;width:8.5px;height:8.5px;background:rgb(229,229,231)"></div><div class="ab" style="left:202.8px;top:227.5px;width:8.5px;height:8.5px;background:rgb(244,244,246)"></div><div class="ab" style="left:160.8px;top:235.9px;width:8.5px;height:8.5px;background:rgb(231,231,233)"></div><div class="ab" style="left:169.2px;top:235.9px;width:8.5px;height:8.5px;background:rgb(233,233,235)"></div><div class="ab" style="left:177.6px;top:235.9px;width:8.5px;height:8.5px;background:rgb(233,233,235)"></div><div class="ab" style="left:186.0px;top:235.9px;width:8.5px;height:8.5px;background:rgb(235,235,237)"></div><div class="ab" style="left:194.4px;top:235.9px;width:8.5px;height:8.5px;background:rgb(237,237,239)"></div><div class="ab" style="left:202.8px;top:235.9px;width:8.5px;height:8.5px;background:rgb(246,246,248)"></div><div class="ab" style="left:160.8px;top:244.3px;width:8.5px;height:8.5px;background:rgb(244,244,246)"></div><div class="ab" style="left:169.2px;top:244.3px;width:8.5px;height:8.5px;background:rgb(213,213,215)"></div><div class="ab" style="left:177.6px;top:244.3px;width:8.5px;height:8.5px;background:rgb(215,215,217)"></div><div class="ab" style="left:186.0px;top:244.3px;width:8.5px;height:8.5px;background:rgb(207,207,209)"></div><div class="ab" style="left:194.4px;top:244.3px;width:8.5px;height:8.5px;background:rgb(223,223,225)"></div><div class="ab" style="left:202.8px;top:244.3px;width:8.5px;height:8.5px;background:rgb(250,250,252)"></div><div class="ab" style="left:160.8px;top:252.7px;width:8.5px;height:8.5px;background:rgb(248,248,250)"></div><div class="ab" style="left:169.2px;top:252.7px;width:8.5px;height:8.5px;background:rgb(248,248,250)"></div><div class="ab" style="left:177.6px;top:252.7px;width:8.5px;height:8.5px;background:rgb(248,248,250)"></div><div class="ab" style="left:186.0px;top:252.7px;width:8.5px;height:8.5px;background:rgb(248,248,250)"></div><div class="ab" style="left:194.4px;top:252.7px;width:8.5px;height:8.5px;background:rgb(248,248,250)"></div><div class="ab" style="left:202.8px;top:252.7px;width:8.5px;height:8.5px;background:rgb(250,250,252)"></div><div class="ab" style="left:160.8px;top:261.1px;width:8.5px;height:8.5px;background:rgb(205,205,207)"></div><div class="ab" style="left:169.2px;top:261.1px;width:8.5px;height:8.5px;background:rgb(207,207,209)"></div><div class="ab" style="left:177.6px;top:261.1px;width:8.5px;height:8.5px;background:rgb(203,203,205)"></div><div class="ab" style="left:186.0px;top:261.1px;width:8.5px;height:8.5px;background:rgb(207,207,209)"></div><div class="ab" style="left:194.4px;top:261.1px;width:8.5px;height:8.5px;background:rgb(199,199,201)"></div><div class="ab" style="left:202.8px;top:261.1px;width:8.5px;height:8.5px;background:rgb(246,246,248)"></div><div class="ab" style="left:160.8px;top:269.5px;width:8.5px;height:8.5px;background:rgb(209,209,211)"></div><div class="ab" style="left:169.2px;top:269.5px;width:8.5px;height:8.5px;background:rgb(213,213,215)"></div><div class="ab" style="left:177.6px;top:269.5px;width:8.5px;height:8.5px;background:rgb(227,227,229)"></div><div class="ab" style="left:186.0px;top:269.5px;width:8.5px;height:8.5px;background:rgb(221,221,223)"></div><div class="ab" style="left:194.4px;top:269.5px;width:8.5px;height:8.5px;background:rgb(244,244,246)"></div><div class="ab" style="left:202.8px;top:269.5px;width:8.5px;height:8.5px;background:rgb(250,250,252)"></div><div class="ab" style="left:160.8px;top:277.9px;width:8.5px;height:8.5px;background:rgb(231,231,233)"></div><div class="ab" style="left:169.2px;top:277.9px;width:8.5px;height:8.5px;background:rgb(233,233,235)"></div><div class="ab" style="left:177.6px;top:277.9px;width:8.5px;height:8.5px;background:rgb(233,233,235)"></div><div class="ab" style="left:186.0px;top:277.9px;width:8.5px;height:8.5px;background:rgb(235,235,237)"></div><div class="ab" style="left:194.4px;top:277.9px;width:8.5px;height:8.5px;background:rgb(244,244,246)"></div><div class="ab" style="left:202.8px;top:277.9px;width:8.5px;height:8.5px;background:rgb(250,250,252)"></div><div class="ab" style="left:160.8px;top:286.3px;width:8.5px;height:8.5px;background:rgb(248,248,250)"></div><div class="ab" style="left:169.2px;top:286.3px;width:8.5px;height:8.5px;background:rgb(211,211,213)"></div><div class="ab" style="left:177.6px;top:286.3px;width:8.5px;height:8.5px;background:rgb(225,225,227)"></div><div class="ab" style="left:186.0px;top:286.3px;width:8.5px;height:8.5px;background:rgb(217,217,219)"></div><div class="ab" style="left:194.4px;top:286.3px;width:8.5px;height:8.5px;background:rgb(250,250,252)"></div><div class="ab" style="left:202.8px;top:286.3px;width:8.5px;height:8.5px;background:rgb(250,250,252)"></div><div class="ab" style="left:160.8px;top:294.7px;width:8.5px;height:8.5px;background:rgb(248,248,250)"></div><div class="ab" style="left:169.2px;top:294.7px;width:8.5px;height:8.5px;background:rgb(248,248,250)"></div><div class="ab" style="left:177.6px;top:294.7px;width:8.5px;height:8.5px;background:rgb(248,248,250)"></div><div class="ab" style="left:186.0px;top:294.7px;width:8.5px;height:8.5px;background:rgb(248,248,250)"></div><div class="ab" style="left:194.4px;top:294.7px;width:8.5px;height:8.5px;background:rgb(248,248,250)"></div><div class="ab" style="left:202.8px;top:294.7px;width:8.5px;height:8.5px;background:rgb(250,250,252)"></div><div class="ab" style="left:160.8px;top:303.1px;width:8.5px;height:8.5px;background:rgb(201,201,203)"></div><div class="ab" style="left:169.2px;top:303.1px;width:8.5px;height:8.5px;background:rgb(205,205,207)"></div><div class="ab" style="left:177.6px;top:303.1px;width:8.5px;height:8.5px;background:rgb(207,207,209)"></div><div class="ab" style="left:186.0px;top:303.1px;width:8.5px;height:8.5px;background:rgb(209,209,211)"></div><div class="ab" style="left:194.4px;top:303.1px;width:8.5px;height:8.5px;background:rgb(199,199,201)"></div><div class="ab" style="left:202.8px;top:303.1px;width:8.5px;height:8.5px;background:rgb(221,221,223)"></div><div class="ab" style="left:160.8px;top:311.5px;width:8.5px;height:8.5px;background:rgb(211,211,213)"></div><div class="ab" style="left:169.2px;top:311.5px;width:8.5px;height:8.5px;background:rgb(205,205,207)"></div><div class="ab" style="left:177.6px;top:311.5px;width:8.5px;height:8.5px;background:rgb(223,223,225)"></div><div class="ab" style="left:186.0px;top:311.5px;width:8.5px;height:8.5px;background:rgb(225,225,227)"></div><div class="ab" style="left:194.4px;top:311.5px;width:8.5px;height:8.5px;background:rgb(237,237,239)"></div><div class="ab" style="left:202.8px;top:311.5px;width:8.5px;height:8.5px;background:rgb(225,225,227)"></div><div class="ab" style="left:160.8px;top:319.9px;width:8.5px;height:8.5px;background:rgb(235,235,237)"></div><div class="ab" style="left:169.2px;top:319.9px;width:8.5px;height:8.5px;background:rgb(227,227,229)"></div><div class="ab" style="left:177.6px;top:319.9px;width:8.5px;height:8.5px;background:rgb(233,233,235)"></div><div class="ab" style="left:186.0px;top:319.9px;width:8.5px;height:8.5px;background:rgb(235,235,237)"></div><div class="ab" style="left:194.4px;top:319.9px;width:8.5px;height:8.5px;background:rgb(246,246,248)"></div><div class="ab" style="left:202.8px;top:319.9px;width:8.5px;height:8.5px;background:rgb(248,248,250)"></div><div class="ab" style="left:160.8px;top:328.3px;width:8.5px;height:8.5px;background:rgb(248,248,250)"></div><div class="ab" style="left:169.2px;top:328.3px;width:8.5px;height:8.5px;background:rgb(215,215,217)"></div><div class="ab" style="left:177.6px;top:328.3px;width:8.5px;height:8.5px;background:rgb(215,215,217)"></div><div class="ab" style="left:186.0px;top:328.3px;width:8.5px;height:8.5px;background:rgb(219,219,221)"></div><div class="ab" style="left:194.4px;top:328.3px;width:8.5px;height:8.5px;background:rgb(250,250,252)"></div><div class="ab" style="left:202.8px;top:328.3px;width:8.5px;height:8.5px;background:rgb(250,250,252)"></div><div class="ab" style="left:160.8px;top:336.7px;width:8.5px;height:8.5px;background:rgb(246,246,248)"></div><div class="ab" style="left:169.2px;top:336.7px;width:8.5px;height:8.5px;background:rgb(246,246,248)"></div><div class="ab" style="left:177.6px;top:336.7px;width:8.5px;height:8.5px;background:rgb(246,246,248)"></div><div class="ab" style="left:186.0px;top:336.7px;width:8.5px;height:8.5px;background:rgb(246,246,248)"></div><div class="ab" style="left:194.4px;top:336.7px;width:8.5px;height:8.5px;background:rgb(246,246,248)"></div><div class="ab" style="left:202.8px;top:336.7px;width:8.5px;height:8.5px;background:rgb(248,248,250)"></div><div class="ab" style="left:160.8px;top:345.1px;width:8.5px;height:8.5px;background:rgb(209,209,211)"></div><div class="ab" style="left:169.2px;top:345.1px;width:8.5px;height:8.5px;background:rgb(203,203,205)"></div><div class="ab" style="left:177.6px;top:345.1px;width:8.5px;height:8.5px;background:rgb(209,209,211)"></div><div class="ab" style="left:186.0px;top:345.1px;width:8.5px;height:8.5px;background:rgb(201,201,203)"></div><div class="ab" style="left:194.4px;top:345.1px;width:8.5px;height:8.5px;background:rgb(225,225,227)"></div><div class="ab" style="left:202.8px;top:345.1px;width:8.5px;height:8.5px;background:rgb(215,215,217)"></div><div class="ab" style="left:160.8px;top:353.5px;width:8.5px;height:8.5px;background:rgb(250,250,252)"></div><div class="ab" style="left:169.2px;top:353.5px;width:8.5px;height:8.5px;background:rgb(221,221,223)"></div><div class="ab" style="left:177.6px;top:353.5px;width:8.5px;height:8.5px;background:rgb(225,225,227)"></div><div class="ab" style="left:186.0px;top:353.5px;width:8.5px;height:8.5px;background:rgb(221,221,223)"></div><div class="ab" style="left:194.4px;top:353.5px;width:8.5px;height:8.5px;background:rgb(250,250,252)"></div><div class="ab" style="left:202.8px;top:353.5px;width:8.5px;height:8.5px;background:rgb(250,250,252)"></div><div class="ab" style="left:160.8px;top:361.9px;width:8.5px;height:8.5px;background:rgb(246,246,248)"></div><div class="ab" style="left:169.2px;top:361.9px;width:8.5px;height:8.5px;background:rgb(246,246,248)"></div><div class="ab" style="left:177.6px;top:361.9px;width:8.5px;height:8.5px;background:rgb(246,246,248)"></div><div class="ab" style="left:186.0px;top:361.9px;width:8.5px;height:8.5px;background:rgb(246,246,248)"></div><div class="ab" style="left:194.4px;top:361.9px;width:8.5px;height:8.5px;background:rgb(246,246,248)"></div><div class="ab" style="left:202.8px;top:361.9px;width:8.5px;height:8.5px;background:rgb(246,246,248)"></div><div class="ab" style="left:160.8px;top:370.3px;width:8.5px;height:8.5px;background:rgb(221,221,223)"></div><div class="ab" style="left:169.2px;top:370.3px;width:8.5px;height:8.5px;background:rgb(219,219,221)"></div><div class="ab" style="left:177.6px;top:370.3px;width:8.5px;height:8.5px;background:rgb(211,211,213)"></div><div class="ab" style="left:186.0px;top:370.3px;width:8.5px;height:8.5px;background:rgb(219,219,221)"></div><div class="ab" style="left:194.4px;top:370.3px;width:8.5px;height:8.5px;background:rgb(225,225,227)"></div><div class="ab" style="left:202.8px;top:370.3px;width:8.5px;height:8.5px;background:rgb(231,231,233)"></div><div class="ab" style="left:160.8px;top:378.7px;width:8.5px;height:8.5px;background:rgb(231,231,233)"></div><div class="ab" style="left:169.2px;top:378.7px;width:8.5px;height:8.5px;background:rgb(233,233,235)"></div><div class="ab" style="left:177.6px;top:378.7px;width:8.5px;height:8.5px;background:rgb(233,233,235)"></div><div class="ab" style="left:186.0px;top:378.7px;width:8.5px;height:8.5px;background:rgb(233,233,235)"></div><div class="ab" style="left:194.4px;top:378.7px;width:8.5px;height:8.5px;background:rgb(235,235,237)"></div><div class="ab" style="left:202.8px;top:378.7px;width:8.5px;height:8.5px;background:rgb(244,244,246)"></div><div class="ab" style="left:160.8px;top:387.1px;width:8.5px;height:8.5px;background:rgb(246,246,248)"></div><div class="ab" style="left:169.2px;top:387.1px;width:8.5px;height:8.5px;background:rgb(223,223,225)"></div><div class="ab" style="left:177.6px;top:387.1px;width:8.5px;height:8.5px;background:rgb(221,221,223)"></div><div class="ab" style="left:186.0px;top:387.1px;width:8.5px;height:8.5px;background:rgb(227,227,229)"></div><div class="ab" style="left:194.4px;top:387.1px;width:8.5px;height:8.5px;background:rgb(250,250,252)"></div><div class="ab" style="left:202.8px;top:387.1px;width:8.5px;height:8.5px;background:rgb(250,250,252)"></div><div class="ab" style="left:160.8px;top:395.5px;width:8.5px;height:8.5px;background:rgb(248,248,250)"></div><div class="ab" style="left:169.2px;top:395.5px;width:8.5px;height:8.5px;background:rgb(248,248,250)"></div><div class="ab" style="left:177.6px;top:395.5px;width:8.5px;height:8.5px;background:rgb(248,248,250)"></div><div class="ab" style="left:186.0px;top:395.5px;width:8.5px;height:8.5px;background:rgb(248,248,250)"></div><div class="ab" style="left:194.4px;top:395.5px;width:8.5px;height:8.5px;background:rgb(248,248,250)"></div><div class="ab" style="left:202.8px;top:395.5px;width:8.5px;height:8.5px;background:rgb(250,250,252)"></div><div class="ab" style="left:160.8px;top:403.9px;width:8.5px;height:8.5px;background:rgb(217,217,219)"></div><div class="ab" style="left:169.2px;top:403.9px;width:8.5px;height:8.5px;background:rgb(201,201,203)"></div><div class="ab" style="left:177.6px;top:403.9px;width:8.5px;height:8.5px;background:rgb(207,207,209)"></div><div class="ab" style="left:186.0px;top:403.9px;width:8.5px;height:8.5px;background:rgb(209,209,211)"></div><div class="ab" style="left:194.4px;top:403.9px;width:8.5px;height:8.5px;background:rgb(217,217,219)"></div><div class="ab" style="left:202.8px;top:403.9px;width:8.5px;height:8.5px;background:rgb(227,227,229)"></div><div class="ab" style="left:160.8px;top:412.3px;width:8.5px;height:8.5px;background:rgb(233,233,235)"></div><div class="ab" style="left:169.2px;top:412.3px;width:8.5px;height:8.5px;background:rgb(215,215,217)"></div><div class="ab" style="left:177.6px;top:412.3px;width:8.5px;height:8.5px;background:rgb(219,219,221)"></div><div class="ab" style="left:186.0px;top:412.3px;width:8.5px;height:8.5px;background:rgb(223,223,225)"></div><div class="ab" style="left:194.4px;top:412.3px;width:8.5px;height:8.5px;background:rgb(231,231,233)"></div><div class="ab" style="left:202.8px;top:412.3px;width:8.5px;height:8.5px;background:rgb(246,246,248)"></div><div class="ab" style="left:160.8px;top:420.7px;width:8.5px;height:8.5px;background:rgb(244,244,246)"></div><div class="ab" style="left:169.2px;top:420.7px;width:8.5px;height:8.5px;background:rgb(246,246,248)"></div><div class="ab" style="left:177.6px;top:420.7px;width:8.5px;height:8.5px;background:rgb(248,248,250)"></div><div class="ab" style="left:186.0px;top:420.7px;width:8.5px;height:8.5px;background:rgb(244,244,246)"></div><div class="ab" style="left:194.4px;top:420.7px;width:8.5px;height:8.5px;background:rgb(246,246,248)"></div><div class="ab" style="left:202.8px;top:420.7px;width:8.5px;height:8.5px;background:rgb(248,248,250)"></div><div class="ab" style="left:160.8px;top:429.1px;width:8.5px;height:8.5px;background:rgb(215,215,217)"></div><div class="ab" style="left:169.2px;top:429.1px;width:8.5px;height:8.5px;background:rgb(217,217,219)"></div><div class="ab" style="left:177.6px;top:429.1px;width:8.5px;height:8.5px;background:rgb(231,231,233)"></div><div class="ab" style="left:186.0px;top:429.1px;width:8.5px;height:8.5px;background:rgb(225,225,227)"></div><div class="ab" style="left:194.4px;top:429.1px;width:8.5px;height:8.5px;background:rgb(217,217,219)"></div><div class="ab" style="left:202.8px;top:429.1px;width:8.5px;height:8.5px;background:rgb(231,231,233)"></div><div class="ab" style="left:160.8px;top:437.5px;width:8.5px;height:8.5px;background:rgb(231,231,233)"></div><div class="ab" style="left:169.2px;top:437.5px;width:8.5px;height:8.5px;background:rgb(235,235,237)"></div><div class="ab" style="left:177.6px;top:437.5px;width:8.5px;height:8.5px;background:rgb(237,237,239)"></div><div class="ab" style="left:186.0px;top:437.5px;width:8.5px;height:8.5px;background:rgb(244,244,246)"></div><div class="ab" style="left:194.4px;top:437.5px;width:8.5px;height:8.5px;background:rgb(229,229,231)"></div><div class="ab" style="left:202.8px;top:437.5px;width:8.5px;height:8.5px;background:rgb(235,235,237)"></div><div class="ab" style="left:160.8px;top:445.9px;width:8.5px;height:8.5px;background:rgb(209,209,211)"></div><div class="ab" style="left:169.2px;top:445.9px;width:8.5px;height:8.5px;background:rgb(219,219,221)"></div><div class="ab" style="left:177.6px;top:445.9px;width:8.5px;height:8.5px;background:rgb(207,207,209)"></div><div class="ab" style="left:186.0px;top:445.9px;width:8.5px;height:8.5px;background:rgb(221,221,223)"></div><div class="ab" style="left:194.4px;top:445.9px;width:8.5px;height:8.5px;background:rgb(231,231,233)"></div><div class="ab" style="left:202.8px;top:445.9px;width:8.5px;height:8.5px;background:rgb(237,237,239)"></div><div class="ab" style="left:160.8px;top:454.3px;width:8.5px;height:8.5px;background:rgb(225,225,227)"></div><div class="ab" style="left:169.2px;top:454.3px;width:8.5px;height:8.5px;background:rgb(221,221,223)"></div><div class="ab" style="left:177.6px;top:454.3px;width:8.5px;height:8.5px;background:rgb(225,225,227)"></div><div class="ab" style="left:186.0px;top:454.3px;width:8.5px;height:8.5px;background:rgb(229,229,231)"></div><div class="ab" style="left:194.4px;top:454.3px;width:8.5px;height:8.5px;background:rgb(235,235,237)"></div><div class="ab" style="left:202.8px;top:454.3px;width:8.5px;height:8.5px;background:rgb(246,246,248)"></div><div class="ab" style="left:160.8px;top:462.7px;width:8.5px;height:8.5px;background:rgb(244,244,246)"></div><div class="ab" style="left:169.2px;top:462.7px;width:8.5px;height:8.5px;background:rgb(244,244,246)"></div><div class="ab" style="left:177.6px;top:462.7px;width:8.5px;height:8.5px;background:rgb(244,244,246)"></div><div class="ab" style="left:186.0px;top:462.7px;width:8.5px;height:8.5px;background:rgb(244,244,246)"></div><div class="ab" style="left:194.4px;top:462.7px;width:8.5px;height:8.5px;background:rgb(244,244,246)"></div><div class="ab" style="left:202.8px;top:462.7px;width:8.5px;height:8.5px;background:rgb(246,246,248)"></div><div class="ab" style="left:160.8px;top:471.1px;width:8.5px;height:8.5px;background:rgb(227,227,229)"></div><div class="ab" style="left:169.2px;top:471.1px;width:8.5px;height:8.5px;background:rgb(229,229,231)"></div><div class="ab" style="left:177.6px;top:471.1px;width:8.5px;height:8.5px;background:rgb(225,225,227)"></div><div class="ab" style="left:186.0px;top:471.1px;width:8.5px;height:8.5px;background:rgb(233,233,235)"></div><div class="ab" style="left:194.4px;top:471.1px;width:8.5px;height:8.5px;background:rgb(219,219,221)"></div><div class="ab" style="left:202.8px;top:471.1px;width:8.5px;height:8.5px;background:rgb(231,231,233)"></div><div class="ab" style="left:160.8px;top:479.5px;width:8.5px;height:8.5px;background:rgb(223,223,225)"></div><div class="ab" style="left:169.2px;top:479.5px;width:8.5px;height:8.5px;background:rgb(225,225,227)"></div><div class="ab" style="left:177.6px;top:479.5px;width:8.5px;height:8.5px;background:rgb(227,227,229)"></div><div class="ab" style="left:186.0px;top:479.5px;width:8.5px;height:8.5px;background:rgb(225,225,227)"></div><div class="ab" style="left:194.4px;top:479.5px;width:8.5px;height:8.5px;background:rgb(231,231,233)"></div><div class="ab" style="left:202.8px;top:479.5px;width:8.5px;height:8.5px;background:rgb(233,233,235)"></div><div class="ab" style="left:160.8px;top:487.9px;width:8.5px;height:5.1px;background:rgb(227,227,229)"></div><div class="ab" style="left:169.2px;top:487.9px;width:8.5px;height:5.1px;background:rgb(229,229,231)"></div><div class="ab" style="left:177.6px;top:487.9px;width:8.5px;height:5.1px;background:rgb(231,231,233)"></div><div class="ab" style="left:186.0px;top:487.9px;width:8.5px;height:5.1px;background:rgb(229,229,231)"></div><div class="ab" style="left:194.4px;top:487.9px;width:8.5px;height:5.1px;background:rgb(233,233,235)"></div><div class="ab" style="left:202.8px;top:487.9px;width:8.5px;height:5.1px;background:rgb(237,237,239)"></div><div class="ab" style="left:228px;top:168.5px;width:9px;height:8.6px;background:rgb(222,222,224)"></div><div class="ab" style="left:237px;top:168.5px;width:9px;height:8.6px;background:rgb(218,218,220)"></div><div class="ab" style="left:228px;top:194.5px;width:9px;height:8.6px;background:rgb(216,216,218)"></div><div class="ab" style="left:237px;top:194.5px;width:9px;height:8.6px;background:rgb(214,214,216)"></div><div class="ab" style="left:228px;top:228.0px;width:9px;height:8.6px;background:rgb(228,228,230)"></div><div class="ab" style="left:237px;top:228.0px;width:9px;height:8.6px;background:rgb(230,230,232)"></div><div class="ab" style="left:228px;top:236.5px;width:9px;height:8.6px;background:rgb(232,232,234)"></div><div class="ab" style="left:237px;top:236.5px;width:9px;height:8.6px;background:rgb(236,236,238)"></div><div class="ab" style="left:228px;top:270.0px;width:9px;height:8.6px;background:rgb(218,218,220)"></div><div class="ab" style="left:237px;top:270.0px;width:9px;height:8.6px;background:rgb(222,222,224)"></div><div class="ab" style="left:228px;top:278.5px;width:9px;height:8.6px;background:rgb(238,238,240)"></div><div class="ab" style="left:237px;top:278.5px;width:9px;height:8.6px;background:rgb(240,240,242)"></div><div class="ab" style="left:228px;top:312.0px;width:9px;height:8.6px;background:rgb(220,220,222)"></div><div class="ab" style="left:237px;top:312.0px;width:9px;height:8.6px;background:rgb(218,218,220)"></div><div class="ab" style="left:228px;top:349.0px;width:9px;height:8.6px;background:rgb(236,236,238)"></div><div class="ab" style="left:237px;top:349.0px;width:9px;height:8.6px;background:rgb(240,240,242)"></div><div class="ab" style="left:228px;top:381.0px;width:9px;height:8.6px;background:rgb(208,208,210)"></div><div class="ab" style="left:237px;top:381.0px;width:9px;height:8.6px;background:rgb(204,204,206)"></div><div class="ab" style="left:228px;top:410.5px;width:9px;height:8.6px;background:rgb(236,236,238)"></div><div class="ab" style="left:237px;top:410.5px;width:9px;height:8.6px;background:rgb(238,238,240)"></div><div class="ab" style="left:228px;top:447.5px;width:9px;height:8.6px;background:rgb(226,226,228)"></div><div class="ab" style="left:237px;top:447.5px;width:9px;height:8.6px;background:rgb(232,232,234)"></div></div>
<div class="t" style="left:125px;top:508px;color:#606266;font-size:7px">共</div>
<div class="ab" style="left:133px;top:508px;width:27px;height:7px;background:#e3e3e3;filter:blur(1px)"></div>
<div class="ab inp" style="left:164px;top:504px;width:51px;height:14px"></div>
<div class="c" style="left:186px;top:511.3px;color:#606266;font-size:6.8px">30条/页</div>
<svg class="ab" style="left:204.5px;top:508.8px" width="6" height="5" viewBox="0 0 6 5"><path d="M0.5 1 L3 3.5 L5.5 1" stroke="#c0c4cc" stroke-width="0.8" fill="none"/></svg>
<svg class="ab" style="left:228px;top:508px" width="5" height="7" viewBox="0 0 5 7"><path d="M4 0.8 L1.2 3.5 L4 6.2" stroke="#b0b3b8" stroke-width="0.8" fill="none"/></svg>
<div class="ab" style="left:240.5px;top:504px;width:18.5px;height:14px;background:#2a9e6f;border-radius:1px"></div>
<div class="c" style="left:249.7px;top:510.9px;color:#fff;font-size:7px;-webkit-text-stroke:0.3px #fff">1</div>
<div class="c" style="left:267.5px;top:510.7px;color:#303133;font-size:7px;-webkit-text-stroke:0.3px #303133">2</div>
<div class="c" style="left:285.5px;top:510.7px;color:#303133;font-size:7px;-webkit-text-stroke:0.3px #303133">3</div>
<div class="c" style="left:303.7px;top:510.7px;color:#303133;font-size:7px;-webkit-text-stroke:0.3px #303133">4</div>
<div class="c" style="left:322.2px;top:510.7px;color:#303133;font-size:7px;-webkit-text-stroke:0.3px #303133">5</div>
<div class="c" style="left:339.6px;top:510.7px;color:#303133;font-size:7px;-webkit-text-stroke:0.3px #303133">6</div>
<div class="c" style="left:357.8px;top:510.7px;color:#303133;font-size:7px;-webkit-text-stroke:0.3px #303133">···</div>
<div class="c" style="left:375.9px;top:510.7px;color:#303133;font-size:7px;-webkit-text-stroke:0.3px #303133">99</div>
<svg class="ab" style="left:393px;top:508px" width="5" height="7" viewBox="0 0 5 7"><path d="M1 0.8 L3.8 3.5 L1 6.2" stroke="#606266" stroke-width="0.8" fill="none"/></svg>
<div class="t" style="left:415px;top:508px;color:#606266;font-size:6.8px">前往</div>
<div class="ab inp" style="left:430.5px;top:504.5px;width:23px;height:14px"></div>
<div class="c" style="left:442px;top:511.5px;color:#606266;font-size:6.8px">1</div>
<div class="t" style="left:456px;top:508px;color:#606266;font-size:6.8px">页</div>
<div class="ab btn" style="left:1045px;top:503px;width:30.5px;height:17.5px"></div>
<div class="c" style="left:1060.8px;top:511.8px;color:#fff;font-size:7px;-webkit-text-stroke:0.1px #fff">导 出</div>
</body></html>
